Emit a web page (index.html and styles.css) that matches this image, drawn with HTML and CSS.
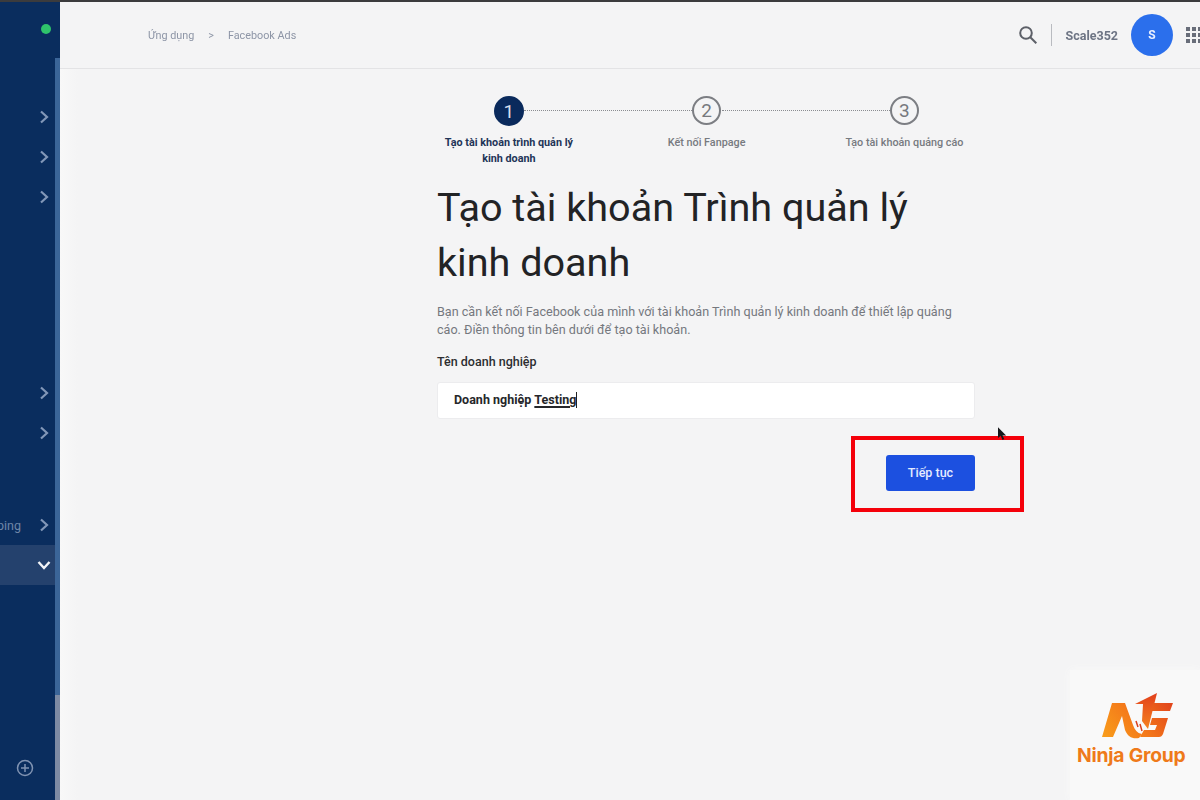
FILE: index.html
```html
<!DOCTYPE html>
<html lang="vi">
<head>
<meta charset="utf-8">
<title>Facebook Ads</title>
<link rel="stylesheet" href="styles.css">
</head>
<body>
<div class="screen">
  <div class="topstrip"></div>
  <div class="app">
    <aside class="sidebar">
      <div class="side-main">
        <div class="status"><span class="dot"></span></div>
        <div class="group g1">
          <div class="row"><svg class="chev" viewBox="0 0 10 14"><path d="M2 1.500 8 7l-6 5.500"/></svg></div>
          <div class="row"><svg class="chev" viewBox="0 0 10 14"><path d="M2 1.500 8 7l-6 5.500"/></svg></div>
          <div class="row"><svg class="chev" viewBox="0 0 10 14"><path d="M2 1.500 8 7l-6 5.500"/></svg></div>
        </div>
        <div class="group g2">
          <div class="row"><svg class="chev" viewBox="0 0 10 14"><path d="M2 1.500 8 7l-6 5.500"/></svg></div>
          <div class="row"><svg class="chev" viewBox="0 0 10 14"><path d="M2 1.500 8 7l-6 5.500"/></svg></div>
        </div>
        <div class="group g3">
          <div class="row"><span class="row-label">ping</span><svg class="chev" viewBox="0 0 10 14"><path d="M2 1.500 8 7l-6 5.500"/></svg></div>
          <div class="row active"><svg class="chev-down" viewBox="0 0 14 10"><path d="M1.500 2 7 8l5.500-6"/></svg></div>
        </div>
        <div class="add">
          <svg viewBox="0 0 18 18" class="add-icon"><circle cx="9" cy="9" r="7.500"/><path d="M9 5v8M5 9h8"/></svg>
        </div>
      </div>
      <div class="scroll"><div class="scroll-top"></div><div class="scroll-thumb"></div><div class="scroll-end"></div></div>
    </aside>
    <div class="page">
      <header class="header">
        <nav class="crumbs">
          <span>Ứng dụng</span>
          <span class="sep">&gt;</span>
          <span>Facebook Ads</span>
        </nav>
        <div class="tools">
          <svg class="search" viewBox="0 0 18 18"><circle cx="7" cy="7" r="5.800"/><path d="m11.300 11.300 6 6"/></svg>
          <span class="divider"></span>
          <span class="user">Scale352</span>
          <span class="avatar">S</span>
          <span class="apps">
            <i></i><i></i><i></i><i></i><i></i><i></i><i></i><i></i><i></i>
          </span>
        </div>
      </header>
      <main class="main">
        <ol class="stepper">
          <li class="step current">
            <span class="num">1</span>
            <span class="step-label">Tạo tài khoản trình quản lý<br>kinh doanh</span>
          </li>
          <li class="step">
            <span class="num">2</span>
            <span class="step-label">Kết nối Fanpage</span>
          </li>
          <li class="step last">
            <span class="num">3</span>
            <span class="step-label">Tạo tài khoản quảng cáo</span>
          </li>
        </ol>
        <section class="form">
          <h1 class="title">Tạo tài khoản Trình quản lý<br>kinh doanh</h1>
          <p class="desc">Bạn cần kết nối Facebook của mình với tài khoản Trình quản lý kinh doanh để thiết lập quảng<br>cáo. Điền thông tin bên dưới để tạo tài khoản.</p>
          <div class="field-label">Tên doanh nghiệp</div>
          <div class="input">Doanh nghiệp <span class="typed">Testing</span><span class="caret"></span></div>
          <div class="actions">
            <div class="highlight"></div>
            <svg class="cursor" viewBox="0 0 10 16"><path d="M0 0v12l3-2.500 2 4.500 2-1-2-4h4z"/></svg>
            <button class="btn" type="button">Tiếp tục</button>
          </div>
        </section>
      </main>
    </div>
  </div>
  <div class="watermark">
    <svg class="wm-logo" viewBox="0 0 80 60">
      <defs>
        <linearGradient id="wg" gradientUnits="userSpaceOnUse" x1="12" y1="55" x2="72" y2="8">
          <stop offset="0" stop-color="#f9a01b"/>
          <stop offset=".5" stop-color="#f47a1a"/>
          <stop offset="1" stop-color="#e2471c"/>
        </linearGradient>
        <linearGradient id="wa" x1="0" y1="0" x2="0" y2="1">
          <stop offset="0" stop-color="#e2401c"/>
          <stop offset="1" stop-color="#f5821f"/>
        </linearGradient>
      </defs>
      <path fill="url(#wg)" d="M12 52 22 18h13l8 22c2 5 4 8 9 9l-3 4c-7 1-11-1-14-8L32 31 23 52z"/>
      <path fill="url(#wa)" d="M45 19 67 8l-9 36-6-8 1-17z"/>
      <path fill="url(#wg)" d="M63 18h20l-3 8H61zM62 33h16l-5 16c-1 2-2 3-4 3H50l4-7h11l2-5h-7z"/>
      <path fill="none" stroke="#d9401c" stroke-width="1.500" d="M46 36l2 6M50 39l2 7"/>
    </svg>
    <span class="wm-text">Ninja Group</span>
  </div>
</div>
</body>
</html>
```
FILE: styles.css
```css
* { box-sizing: border-box; }
html, body { margin: 0; padding: 0; }
body {
  width: 1200px;
  height: 800px;
  overflow: hidden;
  background: #f4f4f5;
  font-family: Roboto, "Noto Sans", sans-serif;
  color: #222;
}
.screen {
  position: relative;
  width: 1200px;
  height: 800px;
  display: flex;
  flex-direction: column;
  filter: blur(0.4px);
}
.topstrip { height: 2px; background: #3b3b3d; flex: none; }
.app { flex: 1; display: flex; min-height: 0; }

/* sidebar */
.sidebar { width: 60px; flex: none; display: flex; background: #0a2d5e; }
.side-main { width: 55px; flex: none; display: flex; flex-direction: column; overflow: hidden; }
.status { height: 55px; flex: none; display: flex; justify-content: flex-end; padding: 22px 4px 0 0; }
.dot { width: 10px; height: 10px; border-radius: 50%; background: #2fc46b; }
.row {
  height: 40px;
  display: flex;
  align-items: center;
  justify-content: flex-end;
  padding-right: 6px;
  gap: 18px;
}
.row-label { font-size: 12.500px; color: #6f86a8; }
.row.active { background: #24416d; }
.g1 { margin-top: 40px; }
.g2 { margin-top: 156px; }
.g3 { margin-top: 52px; }
.chev { width: 10px; height: 14px; flex: none; fill: none; stroke: #8297b8; stroke-width: 2.200; }
.chev-down { width: 14px; height: 10px; margin-right: -2px; flex: none; fill: none; stroke: #f2f4f8; stroke-width: 2.400; }
.add { margin-top: auto; padding: 0 0 23px 16px; display: flex; }
.add-icon { width: 18px; height: 18px; fill: none; stroke: #8093b2; stroke-width: 1.500; }
.scroll { width: 5px; flex: none; display: flex; flex-direction: column; }
.scroll-top { height: 56px; background: #0a2d5e; }
.scroll-thumb { height: 637px; background: #3b6598; }
.scroll-end { flex: 1; background: #7d8aa3; }

/* header */
.page { flex: 1; min-width: 0; display: flex; flex-direction: column; }
.header {
  height: 67px;
  flex: none;
  display: flex;
  align-items: center;
  justify-content: space-between;
  border-bottom: 1px solid #e3e3e5;
  padding: 0 0 0 88px;
  overflow: hidden;
}
.crumbs { display: flex; gap: 14px; font-size: 10.800px; color: #8d95a6; }
.tools { display: flex; align-items: center; margin-right: -10px; }
.search { width: 18px; height: 18px; fill: none; stroke: #5d6068; stroke-width: 2; margin-right: 14px; }
.divider { width: 1px; height: 22px; background: #b9bbc0; margin-right: 14px; }
.user { font-size: 12.500px; font-weight: 700; color: #6d7484; margin-right: 13px; }
.avatar {
  width: 42px;
  height: 42px;
  border-radius: 50%;
  background: #2b6fec;
  color: #e8f0ff;
  font-size: 12px;
  font-weight: 700;
  display: flex;
  align-items: center;
  justify-content: center;
  margin-right: 13px;
}
.apps { display: grid; grid-template-columns: repeat(3, 4px); gap: 2px; width: 24px; }
.apps i { width: 4px; height: 4px; background: #686d79; }

/* stepper */
.main {
  flex: 1;
  padding: 27px 0 0 350px;
  background: linear-gradient(to right, #f8f8f8, #f4f4f5 18px);
}
.stepper {
  list-style: none;
  margin: 0;
  padding: 0;
  display: grid;
  grid-template-columns: repeat(3, 197.750px);
  width: 594px;
}
.step {
  position: relative;
  display: flex;
  flex-direction: column;
  align-items: center;
  text-align: center;
}
.step::after {
  content: "";
  position: absolute;
  top: 14px;
  left: calc(50% + 15px);
  width: 168px;
  border-top: 1px dotted #8a8c91;
}
.step.last::after { display: none; }
.num {
  width: 29px;
  height: 29px;
  border-radius: 50%;
  border: 2px solid #7c7e83;
  color: #77797e;
  font-size: 19px;
  display: flex;
  align-items: center;
  justify-content: center;
}
.current .num { width: 30px; height: 30px; background: #0a2a5c; border-color: #0a2a5c; color: #d7deea; }
.step .step-label {
  margin-top: 10px;
  font-size: 10.800px;
  line-height: 16px;
  font-weight: 500;
  color: #777a80;
  white-space: nowrap;
}
.current .step-label { margin-top: 9px; color: #1f3558; font-weight: 700; }

/* form */
.form { width: 538px; margin-left: 27px; margin-top: 13px; }
.title {
  margin: 0;
  font-size: 39.600px;
  line-height: 55px;
  font-weight: 400;
  color: #222325;
}
.desc {
  margin: 13px 0 0;
  font-size: 12.600px;
  line-height: 18px;
  color: #75787e;
}
.field-label { margin-top: 14px; font-size: 12.500px; line-height: 18px; font-weight: 500; color: #2c2d30; }
.input {
  margin-top: 11px;
  height: 37px;
  background: #fff;
  border: 1px solid #ececee;
  border-radius: 3px;
  display: flex;
  align-items: center;
  padding: 0 0 2px 16px;
  font-size: 12.500px;
  font-weight: 700;
  color: #26272a;
  white-space: pre;
}
.typed { text-decoration: underline; text-decoration-thickness: 1.500px; text-underline-offset: 2px; }
.caret { width: 1px; height: 16px; background: #222; }
.actions { position: relative; display: flex; justify-content: flex-end; margin-top: 36px; }
.btn {
  width: 89px;
  height: 36px;
  border: 0;
  border-radius: 3px;
  background: #1c50e0;
  color: #e4ebff;
  font: 500 12.500px Roboto, sans-serif;
  padding-bottom: 3px;
}
.highlight {
  position: absolute;
  left: 414px;
  top: -19px;
  width: 173px;
  height: 76px;
  border: 4px solid #f4000a;
}
.cursor { position: absolute; left: 561px; top: -28px; width: 9px; height: 15px; fill: #16171a; }

/* watermark */
.watermark {
  position: absolute;
  right: 0;
  bottom: 0;
  width: 130px;
  height: 130px;
  background: #f9f9f9;
  box-shadow: 0 0 8px #f9f9f9;
  display: flex;
  flex-direction: column;
  align-items: flex-start;
  padding: 15px 0 0 20px;
}
.wm-logo { width: 80px; height: 60px; overflow: visible; flex: none; }
.wm-text { margin: -1px 0 0 -13px; font: 700 19.300px/22px Inter, sans-serif; letter-spacing: -0.2px; color: #ef7a1a; white-space: nowrap; }
```
